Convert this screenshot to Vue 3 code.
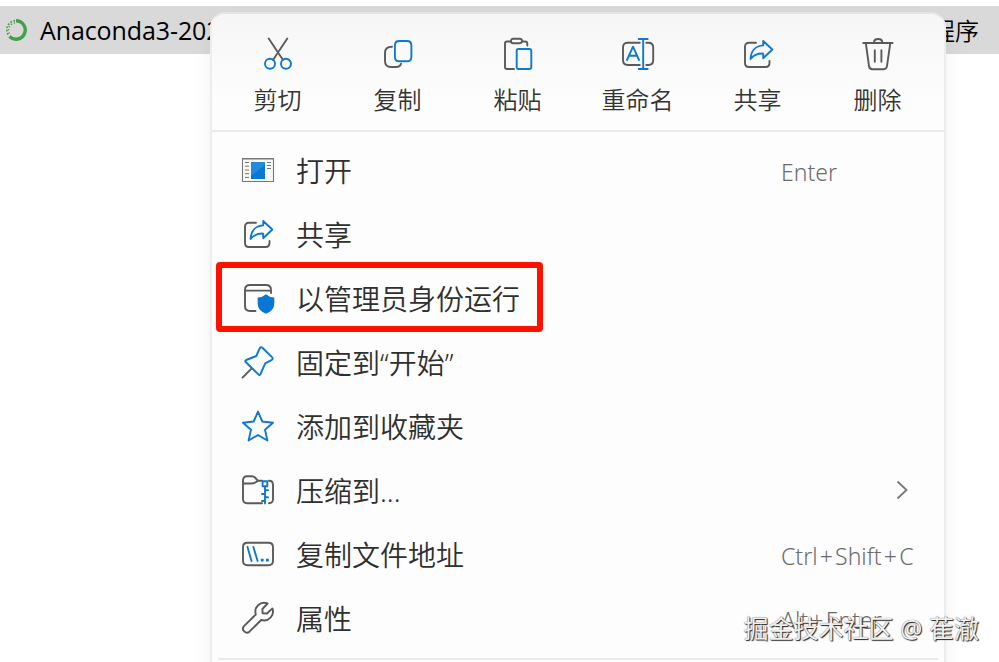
<template>
  <main class="desktop">
    <div class="file-row">
      <svg class="file-icon" viewBox="0 0 24 24">
        <path class="ring" d="M12 2.8A9.2 9.2 0 1 1 5.5 18.5" />
        <path class="ring-dots" d="M11 2.6A9.4 9.4 0 0 0 5 18" />
        <path class="ring-dots inner" d="M11 5A7 7 0 0 0 6.6 17" />
      </svg>
      <span class="file-name">Anaconda3-2024</span>
      <span class="file-type">应用程序</span>
    </div>

    <div class="menu">
      <div class="toolbar">
        <button v-for="tool in tools" :key="tool.label" class="tool" type="button">
          <svg class="icon" viewBox="0 0 36 36">
            <path v-for="(part, i) in icons[tool.icon]" :key="i" :class="part[0]" :d="part[1]" />
          </svg>
          <span>{{ tool.label }}</span>
        </button>
      </div>

      <ul class="items">
        <li v-for="item in items" :key="item.label" class="item">
          <svg class="icon" viewBox="0 0 36 36">
            <path v-for="(part, i) in icons[item.icon]" :key="i" :class="part[0]" :d="part[1]" />
          </svg>
          <span class="label">{{ item.label }}</span>
          <span v-if="item.keys" class="shortcut">
            <template v-for="(key, i) in item.keys" :key="key"><span v-if="i" class="plus">+</span>{{ key }}</template>
          </span>
          <svg v-if="item.submenu" class="chevron" viewBox="0 0 12 20">
            <path d="M1.5 1.5L10.5 10L1.5 18.5" />
          </svg>
          <span v-if="item.highlight" class="highlight"></span>
        </li>
      </ul>
      <div class="separator"></div>
    </div>

    <div class="watermark">掘金技术社区 @ 萑澈</div>
  </main>
</template>

<script setup>
const tools = [
  { label: "剪切", icon: "cut" },
  { label: "复制", icon: "copy" },
  { label: "粘贴", icon: "paste" },
  { label: "重命名", icon: "rename" },
  { label: "共享", icon: "share" },
  { label: "删除", icon: "trash" }
]

const items = [
  { label: "打开", icon: "open", keys: ["Enter"] },
  { label: "共享", icon: "share" },
  { label: "以管理员身份运行", icon: "admin", highlight: true },
  { label: "固定到“开始”", icon: "pin" },
  { label: "添加到收藏夹", icon: "star" },
  { label: "压缩到...", icon: "zip", submenu: true },
  { label: "复制文件地址", icon: "path", keys: ["Ctrl", "Shift", "C"] },
  { label: "属性", icon: "wrench", keys: ["Alt", "Enter"] }
]

// each part is [class, path data]
const icons = {
  cut: [
    ["gray", "M8.7 2.5L23 24M27.3 2.5L19 15M17 18L13 24"],
    ["blue", "M15 27.8a5 5 0 1 1-10 0a5 5 0 1 1 10 0M31 27.8a5 5 0 1 1-10 0a5 5 0 1 1 10 0"]
  ],
  copy: [
    ["gray", "M12 10.8C7.5 10.8 5 12.5 5 17V25C5 29.5 7.5 31 11 31H16C19 31 20.5 30 21 27.8"],
    ["blue", "M19.2 5H27Q31.4 5 31.4 9.5V21Q31.4 25.3 27 25.3H19.2Q14.9 25.3 14.9 21V9.5Q14.9 5 19.2 5Z"]
  ],
  paste: [
    ["gray", "M11 5.5H7Q5 5.5 5 7.5V31Q5 33 7 33H14M22 5.5H25Q27.3 5.5 27.3 7.5V9.5"],
    ["gray", "M13.2 2.8H19.5Q22 2.8 22 5T19.5 7.3H13.2Q11 7.3 11 5T13.2 2.8Z"],
    ["blue", "M18.5 13H29.3Q31.3 13 31.3 15V31Q31.3 33 29.3 33H18.5Q16.7 33 16.7 31V15Q16.7 13 18.5 13Z"]
  ],
  rename: [
    ["gray", "M19.8 6.7H8Q3 6.7 3 11.7V24Q3 29 8 29H19.8M26.3 6.7H28.4Q33.2 6.7 33.2 11.7V24Q33.2 29 28.4 29H26.3"],
    ["blue", "M18.7 3H27.7M23.2 3V33M18.7 33H27.7"],
    ["blue", "M7 24L13 10.7L19 24M9.3 19.7H16.7"]
  ],
  share: [
    ["gray", "M16 6.8H9Q5 6.8 5 10.8V27Q5 31 9 31H25.5Q29.5 31 29.5 27V25"],
    ["blue", "M23.2 5L32.3 13.5L23.2 22.3V17.6C17 17.3 13.3 19.5 10.6 23C11 14.5 16 9.8 23.2 9.4Z"]
  ],
  trash: [
    ["gray", "M3.3 7H32.6M14 6.5C14 1.9 22.3 1.9 22.3 6.5"],
    ["gray", "M5.8 7L9 30Q9.4 33.2 12.5 33.2H23.6Q26.6 33.2 27 30L30.3 7M14.8 14.3V25.8M21.4 14.3V25.8"]
  ],
  open: [
    ["frame", "M2.5 6.5H33.5V29.5H2.5Z"],
    ["thin", "M2 7H34M5 10.5H9M5 14.2H9M5 18H9M5 21.7H9M5 25.4H9M27 10.5H31M27 13.5H31M27 16.5H31"],
    ["solid-light", "M11 10H25V27H11Z"],
    ["solid", "M25 13V27H11V24Z"]
  ],
  admin: [
    ["gray", "M15.5 31H10Q5 31 5 26V10Q5 5 10 5H26Q31 5 31 10V13M5 10.6H31"],
    ["solid", "M26 14.3Q29 17.2 34.3 17.5V23.5Q34.3 30.5 26 33.8Q17.7 30.5 17.7 23.5V17.5Q23 17.2 26 14.3Z"]
  ],
  pin: [
    ["gray", "M2.5 33.6L11.5 24.6"],
    ["blue", "M20 3.7Q21.2 2.7 22.4 3.7L32.2 13.4Q33.4 14.8 31.9 15.8L25.2 19.3L20.5 30Q19.7 31.7 18.4 30.4L5.7 18Q4.6 16.7 6.2 16L16.3 12Z"]
  ],
  star: [
    ["blue", "M18 3.6L22.3 13.5L33 14.7L25 21.8L27.4 32.5L18 27L8.6 32.5L11 21.8L3 14.7L13.7 13.5Z"]
  ],
  zip: [
    ["gray", "M22 8.8H18L15 5.5Q13.7 4.2 11.8 4.2H7Q3 4.2 3 8.5V27Q3 31.2 7 31.2H22M29 8.8Q33 8.8 33 13V27Q33 31.2 29 31.2M3 11.5H11Q14.5 11.5 18 8.8"],
    ["blue", "M22.6 9.2H27.3V14.2H22.6ZM25 14.2V31.5M25 18.3H28M22 22H25M25 25.3H28M22 29H25"]
  ],
  path: [
    ["gray", "M7.5 6.7H28.5Q33 6.7 33 11.2V24.8Q33 29.3 28.5 29.3H7.5Q3 29.3 3 24.8V11.2Q3 6.7 7.5 6.7Z"],
    ["blue", "M7.5 11L11.5 25M13.4 11L17.6 25"],
    ["solid", "M20.8 22.8h2.8v2.8h-2.8ZM26 22.8h2.8v2.8h-2.8Z"]
  ],
  wrench: [
    ["gray", "M27.6 3.5C20 .9 13.7 7 15.8 14.5L4 26.2C.9 29.6 5.9 34.8 9.4 31.7L21.2 20C28.6 22.1 35 15.4 32.4 8.4L27 13.5L22.6 13.2L22.4 9Z"]
  ]
}
</script>

<style>
body {
  margin: 0;
  background: #fff;
}
</style>

<style scoped>
.desktop {
  position: relative;
  box-sizing: border-box;
  width: 999px;
  height: 662px;
  padding-top: 6px;
  overflow: hidden;
  background: #fff;
  font-family: "Noto Sans", "Noto Sans CJK SC", sans-serif;
}

.file-row {
  display: flex;
  align-items: center;
  height: 48px;
  padding: 0 20px 0 4px;
  color: #000;
  background: #d9d9d9;
}

.file-icon {
  width: 24px;
  height: 24px;
  margin-right: 12px;
}

.ring,
.ring-dots {
  fill: none;
  stroke: #43a047;
  stroke-width: 3.4;
}

.ring-dots {
  stroke-width: 1.6;
  stroke-dasharray: 1.7 1.6;
}

.ring-dots.inner {
  stroke-dasharray: 1.2 2;
}

.file-name {
  font-family: "Open Sans", "Noto Sans", sans-serif;
  font-size: 25px;
  letter-spacing: -.1px;
}

.file-type {
  margin-left: auto;
  font-family: "Noto Sans CJK SC", sans-serif;
  font-size: 24px;
  font-weight: 350;
  line-height: 36px;
}

.menu {
  position: absolute;
  top: 12px;
  left: 210px;
  box-sizing: border-box;
  width: 736px;
  height: 700px;
  border: 2px solid #ededed;
  border-top-color: #e4e4e4;
  border-radius: 15px;
  background: #fdfdfd;
  box-shadow: 0 10px 20px rgba(0, 0, 0, .06);
}

.toolbar {
  display: flex;
  height: 116px;
  padding: 0 6px;
  border-bottom: 2px solid #ebebeb;
  border-radius: 13px 13px 0 0;
  background: linear-gradient(#f6f6f6, #fdfdfd 75%);
}

.tool {
  display: flex;
  flex: 0 0 120px;
  flex-direction: column;
  align-items: center;
  padding: 22px 0 0;
  border: 0;
  color: #333;
  background: transparent;
  font: inherit;
  font-size: 24px;
  font-weight: 350;
  line-height: 34px;
}

.tool span {
  margin: 11px 1px 0 0;
}

.icon {
  flex: 0 0 36px;
  width: 36px;
  height: 36px;
  overflow: visible;
}

.icon path {
  fill: none;
  stroke-width: 1.9;
  stroke-linecap: round;
  stroke-linejoin: round;
}

.icon .gray { stroke: #5a5a5a; }
.icon .blue { stroke: #0f78d0; }
.icon .solid { fill: #0878d4; }
.icon .solid-light { fill: #238bdd; }

.icon .frame {
  fill: #f8f8f8;
  stroke: #777;
  stroke-width: 1.1;
}

.icon .thin {
  stroke: #777;
  stroke-width: 1;
  stroke-linecap: butt;
}

.items {
  margin: 0;
  padding: 6px 0 0;
  list-style: none;
}

.item {
  position: relative;
  display: flex;
  align-items: center;
  height: 64px;
  padding: 0 28px;
}

.label {
  width: 485px;
  margin: 2px 0 0 20px;
  color: #2f2f2f;
  font-size: 28px;
  font-weight: 350;
  line-height: 40px;
  white-space: nowrap;
}

.shortcut {
  margin-top: 3px;
  color: #6c6c6c;
  font-size: 23px;
  font-weight: 300;
  white-space: nowrap;
}

.plus {
  margin: 0 2.2px;
}

.chevron {
  width: 12px;
  height: 20px;
  margin: 0 8px 0 auto;
  fill: none;
  stroke: #777;
  stroke-width: 1.8;
}

.highlight {
  position: absolute;
  top: -4px;
  left: 4px;
  box-sizing: border-box;
  width: 327px;
  height: 70px;
  border: 6px solid #ff1000;
  border-radius: 4px;
}

.separator {
  height: 2px;
  margin: 8px 6px 0;
  background: #ebebeb;
}

.watermark {
  position: absolute;
  right: 20px;
  bottom: 16px;
  color: #f0f0f0;
  font-size: 25px;
  line-height: 36px;
  text-shadow: 1px 1px 1px #222, 0 0 1px #555;
  white-space: nowrap;
}
</style>
